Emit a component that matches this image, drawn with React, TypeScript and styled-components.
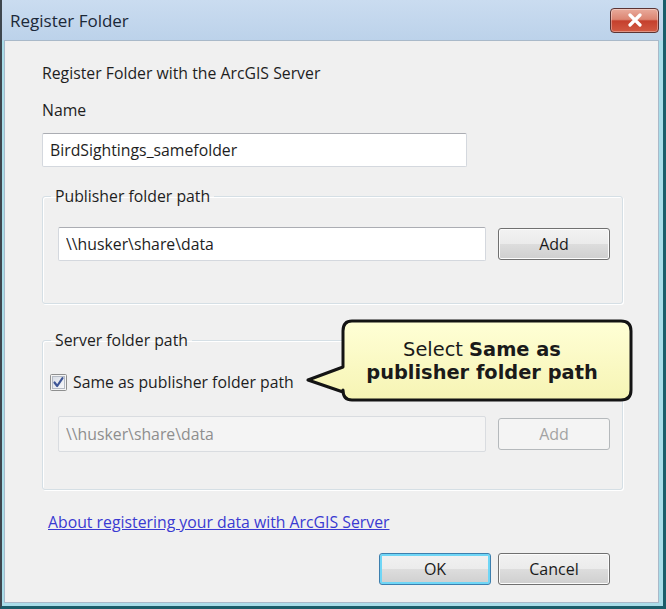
import * as React from 'react'
import styled, { createGlobalStyle } from 'styled-components'

const GlobalStyle = createGlobalStyle`
  html, body {
    margin: 0;
    padding: 0;
    background: #ffffff;
  }
  body {
    font-family: 'Open Sans', 'Noto Sans', sans-serif;
    color: #1e1e1e;
  }
`

const Window = styled.div`
  position: relative;
  width: 666px;
  height: 609px;
  box-sizing: border-box;
  display: flex;
  flex-direction: column;
  border-left: 2px solid #3e464e;
  border-right: 3px solid #1b5d6a;
  border-bottom: 3px solid #1b5d6a;
  background: linear-gradient(#cadcf0, #bcd2ea 40px, #a9dde9 41px);
  overflow: hidden;
`

const TitleBar = styled.div`
  height: 40px;
  flex-shrink: 0;
  display: flex;
  align-items: center;
  justify-content: space-between;
  padding: 0 4px 0 8px;
`

const Title = styled.span`
  font-size: 17px;
  color: #1b2838;
`

const CloseButton = styled.div`
  width: 49px;
  height: 25px;
  box-sizing: border-box;
  display: flex;
  align-items: center;
  justify-content: center;
  border: 1px solid #5b3434;
  border-radius: 4px;
  background: linear-gradient(#e9ab9c 0%, #dc8572 45%, #c5402d 52%, #d25a43 100%);
  box-shadow: inset 0 0 0 1px rgba(255, 255, 255, 0.35);
`

const Content = styled.div`
  flex: 1;
  margin: 0 4px 3px 2px;
  border: 1px solid #a9b9c9;
  background: #f0f0f0;
  padding: 23px 35px 0 37px;
  font-size: 15.8px;
`

const Label = styled.div<{ $gap?: number }>`
  line-height: 18px;
  margin-top: ${(p) => p.$gap || 0}px;
`

const TextBox = styled.input<{ $width?: number; $gap?: number }>`
  display: block;
  box-sizing: border-box;
  width: ${(p) => (p.$width ? p.$width + 'px' : 'auto')};
  flex: ${(p) => (p.$width ? 'none' : '1')};
  height: 34px;
  margin: ${(p) => p.$gap || 0}px 0 0;
  padding: 0 7px;
  border: 1px solid #d4d8de;
  border-top-color: #abadb3;
  border-radius: 2px;
  background: #ffffff;
  font-family: inherit;
  font-size: 15.8px;
  color: #1e1e1e;
  outline: none;

  &:disabled {
    height: 36px;
    background: #f4f4f4;
    border-color: #d9dce0;
    color: #8e8e8e;
  }
`

const GroupBox = styled.fieldset<{ $gap: number; $pad: string }>`
  margin: ${(p) => p.$gap}px 0 0;
  padding: ${(p) => p.$pad};
  border: 1px solid #d5dfe5;
  border-radius: 3px;
  box-shadow: inset 1px 1px 0 #ffffff, 1px 1px 0 #ffffff;
  min-width: 0;
`

const Legend = styled.legend`
  margin-left: 2px;
  padding: 0 4px;
  line-height: 18px;
`

const PathRow = styled.div<{ $gap?: number }>`
  display: flex;
  align-items: center;
  gap: 12px;
  padding-left: 9px;
  margin-top: ${(p) => p.$gap || 0}px;
`

const Button = styled.button<{ $focused?: boolean }>`
  width: 112px;
  height: 32px;
  flex-shrink: 0;
  box-sizing: border-box;
  border: 1px solid ${(p) => (p.$focused ? '#3d7fae' : '#707070')};
  border-radius: 3px;
  background: linear-gradient(#f2f2f2 0%, #ebebeb 50%, #dddddd 50%, #cfcfcf 100%);
  box-shadow: ${(p) =>
    p.$focused ? 'inset 0 0 0 2px #6fd6f6' : 'inset 0 0 0 1px #fcfcfc'};
  font-family: inherit;
  font-size: 16px;
  color: #1a1a1a;
  padding: 0;

  &:disabled {
    border-color: #b5b9bc;
    background: #f4f4f4;
    box-shadow: none;
    color: #a3a3a3;
  }
`

const CheckRow = styled.label`
  display: flex;
  align-items: center;
  gap: 6px;
  height: 20px;
  padding-left: 1px;
`

const HelpLink = styled.a`
  display: block;
  margin: 23px 0 0 6px;
  line-height: 18px;
  color: #3a3ad2;
  text-decoration: underline;
  width: max-content;
`

const ButtonRow = styled.div`
  display: flex;
  justify-content: flex-end;
  gap: 7px;
  margin-top: 22px;
  padding-right: 13px;
`

const Callout = styled.div`
  position: absolute;
  left: 300px;
  top: 317px;
  width: 334px;
  height: 88px;
  box-sizing: border-box;
  padding: 3px 12px 4px 38px;
  display: flex;
  align-items: center;
  justify-content: center;
`

const CalloutShape = styled.svg`
  position: absolute;
  left: 0;
  top: 0;
`

const CalloutText = styled.div`
  position: relative;
  font-family: 'DejaVu Sans', Verdana, sans-serif;
  font-size: 19.4px;
  line-height: 23px;
  text-align: center;
  color: #1a1a1a;

  b {
    font-weight: bold;
  }
`

const CheckBox = () => (
  <svg width="17" height="17" viewBox="0 0 17 17">
    <defs>
      <linearGradient id="cbfill" x1="0" y1="0" x2="1" y2="1">
        <stop offset="0" stopColor="#d8dde6" />
        <stop offset="1" stopColor="#f8f9fb" />
      </linearGradient>
    </defs>
    <rect x="0.5" y="0.5" width="16" height="16" rx="1" fill="#f4f4f4" stroke="#8e8f8f" />
    <rect x="2.5" y="2.5" width="12" height="12" fill="url(#cbfill)" stroke="#b4bac4" />
    <path d="M4.5 8.5 L7.2 12 L12.5 4.2" fill="none" stroke="#3d5596" strokeWidth="2.2" strokeLinecap="round" strokeLinejoin="round" />
  </svg>
)

export default function App() {
  return (
    <Window>
      <GlobalStyle />
      <TitleBar>
        <Title>Register Folder</Title>
        <CloseButton>
          <svg width="16" height="14" viewBox="0 0 16 14">
            <path d="M3 2 L13 12 M13 2 L3 12" stroke="#ffffff" strokeWidth="3.2" strokeLinecap="round" />
          </svg>
        </CloseButton>
      </TitleBar>

      <Content>
        <Label>Register Folder with the ArcGIS Server</Label>
        <Label $gap={19}>Name</Label>
        <TextBox $width={425} $gap={14} readOnly value="BirdSightings_samefolder" />

        <GroupBox $gap={20} $pad="22px 12px 42px 6px">
          <Legend>Publisher folder path</Legend>
          <PathRow>
            <TextBox readOnly value="\\husker\share\data" />
            <Button>Add</Button>
          </PathRow>
        </GroupBox>

        <GroupBox $gap={27} $pad="23px 12px 37px 6px">
          <Legend>Server folder path</Legend>
          <CheckRow>
            <CheckBox />
            Same as publisher folder path
          </CheckRow>
          <PathRow $gap={24}>
            <TextBox disabled value="\\husker\share\data" />
            <Button disabled>Add</Button>
          </PathRow>
        </GroupBox>

        <HelpLink href="#">About registering your data with ArcGIS Server</HelpLink>

        <ButtonRow>
          <Button $focused>OK</Button>
          <Button>Cancel</Button>
        </ButtonRow>
      </Content>

      <Callout>
        <CalloutShape width="334" height="88" viewBox="0 0 334 88">
          <defs>
            <linearGradient id="calloutfill" x1="0" y1="0" x2="0" y2="1">
              <stop offset="0" stopColor="#ffffd6" />
              <stop offset="1" stopColor="#f6f4b4" />
            </linearGradient>
          </defs>
          <path
            d="M50 4 H319 Q329 4 329 14 V73 Q329 83 319 83 H50 Q41 83 41 73 V75 L6 63 L41 50 V14 Q41 4 50 4 Z"
            fill="url(#calloutfill)"
            stroke="#141414"
            strokeWidth="3"
            strokeLinejoin="round"
          />
        </CalloutShape>
        <CalloutText>
          Select <b>Same as</b>
          <br />
          <b>publisher folder path</b>
        </CalloutText>
      </Callout>
    </Window>
  )
}
